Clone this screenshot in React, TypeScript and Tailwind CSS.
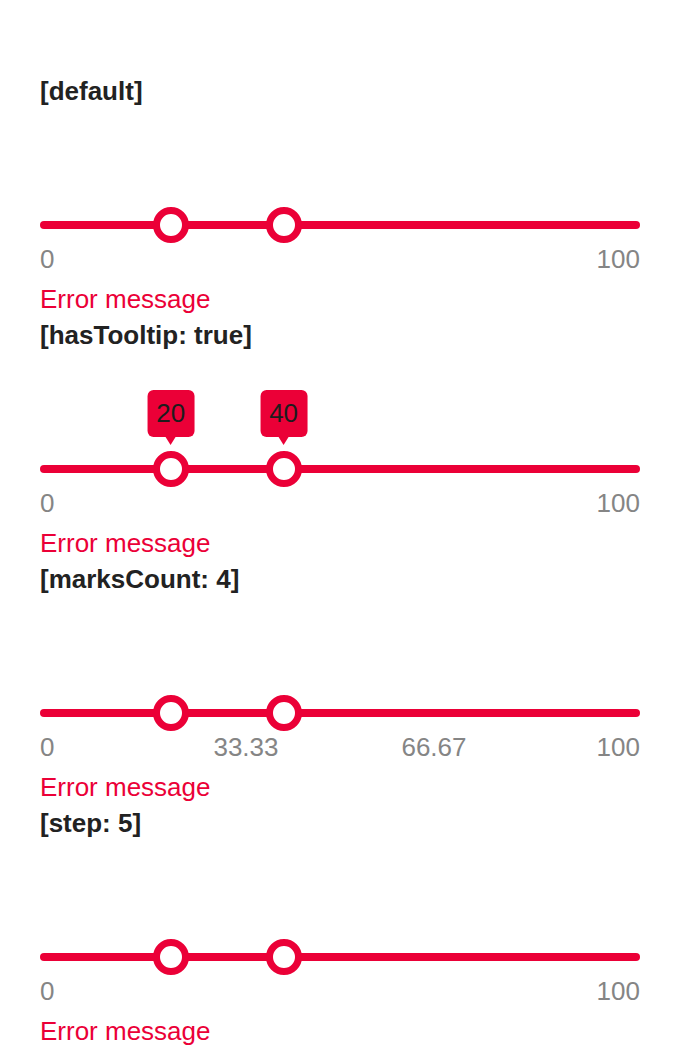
import React from 'react';

const RED = 'bg-[#eb0037]';

type SliderProps = {
  values: number[];
  marks: string[];
  hasTooltip?: boolean;
};

const thumbLeft = (v: number) => `calc(18px + ${v / 100} * (100% - 36px))`;

const Slider = ({ values, marks, hasTooltip }: SliderProps) => {
  const middle = marks.slice(1, -1);
  return (
    <div>
      <div className="relative h-[38px] mt-[99px] flex items-center">
        <div className={`w-full h-2 rounded-full ${RED}`} />
        {values.map((v) => (
          <div
            key={v}
            className="absolute top-px -translate-x-1/2"
            style={{ left: thumbLeft(v) }}
          >
            <div className="w-9 h-9 rounded-full border-[7px] border-[#eb0037] bg-white" />
            {hasTooltip && (
              <div className="absolute left-1/2 -translate-x-1/2 bottom-[42px] flex flex-col items-center">
                <div className={`h-[47px] px-[9px] rounded-md ${RED} flex items-center text-[26px] text-[#1c1c1c]`}>
                  {v}
                </div>
                <div className="w-0 h-0 border-l-[5px] border-r-[5px] border-t-[8px] border-l-transparent border-r-transparent border-t-[#eb0037]" />
              </div>
            )}
          </div>
        ))}
      </div>
      <div className="relative h-[30px] flex justify-between items-center text-[26px] leading-[30px] text-[#858585]">
        <span>{marks[0]}</span>
        {middle.map((m, i) => (
          <span
            key={m}
            className="absolute top-0 -translate-x-1/2"
            style={{ left: thumbLeft(((i + 1) * 100) / (marks.length - 1)) }}
          >
            {m}
          </span>
        ))}
        <span>{marks[marks.length - 1]}</span>
      </div>
    </div>
  );
};

const Section = ({ title, ...props }: SliderProps & { title: string }) => (
  <div className="mb-1">
    <div className="h-8 leading-8 text-[26px] font-bold text-[#222]">{title}</div>
    <Slider {...props} />
    <div className="mt-[9px] h-8 leading-8 text-[26px] text-[#eb0037]">Error message</div>
  </div>
);

export default function App() {
  return (
    <div className="bg-white min-h-[1062px] px-10 pt-[75px]" style={{ fontFamily: '"Liberation Sans", Arial, sans-serif' }}>
      <Section title="[default]" values={[20, 40]} marks={['0', '100']} />
      <Section title="[hasTooltip: true]" values={[20, 40]} marks={['0', '100']} hasTooltip />
      <Section title="[marksCount: 4]" values={[20, 40]} marks={['0', '33.33', '66.67', '100']} />
      <Section title="[step: 5]" values={[20, 40]} marks={['0', '100']} />
    </div>
  );
}
